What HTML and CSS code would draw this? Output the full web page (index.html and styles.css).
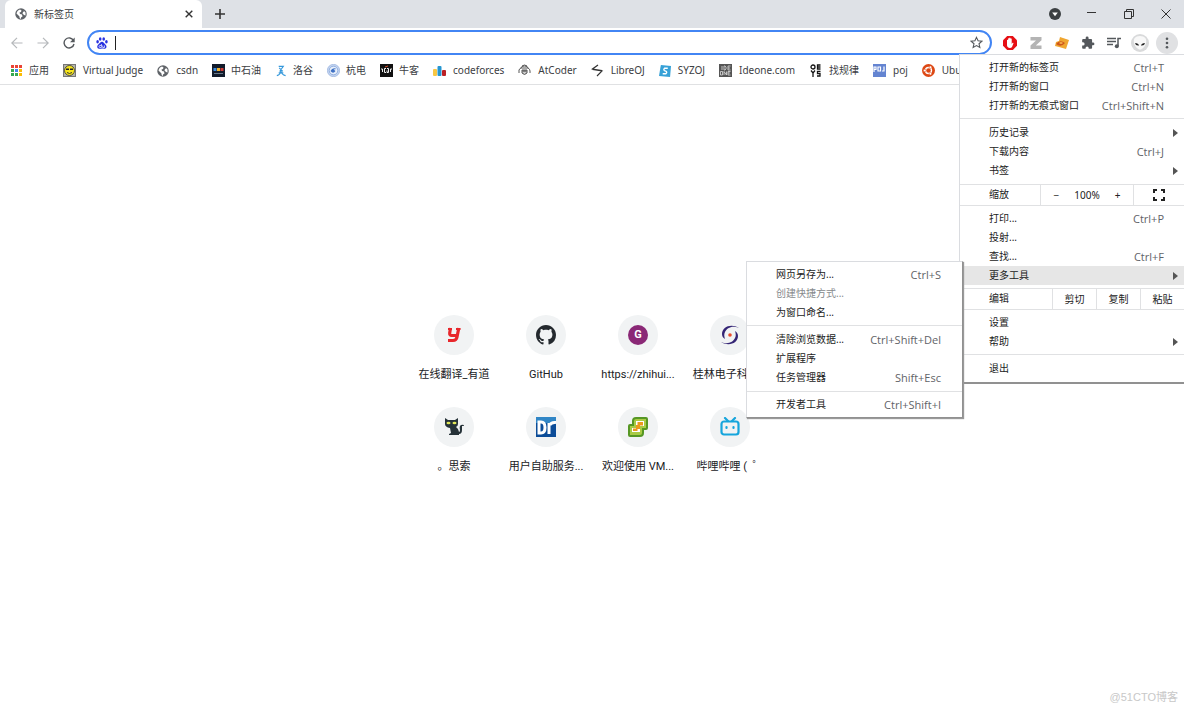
FILE: index.html
```html
<!DOCTYPE html>
<html lang="zh-CN">
<head>
<meta charset="utf-8">
<title>新标签页</title>
<link rel="stylesheet" href="styles.css">
</head>
<body>
<svg class="defs" aria-hidden="true">
  <symbol id="globe" viewBox="0 0 24 24"><circle cx="12" cy="12" r="11.5" fill="#5f6368"/><path d="M4 8c1-2 3-4 6-5l3 2-1 3-3 1 1 3 4 1 1 4-3 2v3c-3-1-3-3-3-5L6 14l-3-3zM17 5l4 4v6l-3-1-3-3 1-3 2-1z" fill="#fff"/></symbol>
  <symbol id="arrow" viewBox="0 0 6 8"><path d="M0 0l5 4-5 4z" fill="#555"/></symbol>
</svg>
<header class="browser">
  <div class="tabstrip">
    <div class="tab">
      <svg class="i12"><use href="#globe"/></svg>
      <span class="tab-title">新标签页</span>
      <button class="bare" aria-label="关闭标签页"><svg class="i8" viewBox="0 0 8 8"><path d="M.7.7l6.600 6.600M7.300.7L.7 7.300" stroke="#333" stroke-width="1.400"/></svg></button>
    </div>
    <button class="bare plus" aria-label="新标签页按钮"><svg class="i10" viewBox="0 0 10 10"><path d="M5 0v10M0 5h10" stroke="#333" stroke-width="1.600"/></svg></button>
    <div class="window-controls">
      <button class="bare" aria-label="搜索标签页"><svg class="i12" viewBox="0 0 12 12"><circle cx="6" cy="6" r="6" fill="#3c4043"/><path d="M3.200 4.500h5.600L6 8.200z" fill="#fff"/></svg></button>
      <button class="bare" aria-label="最小化"><svg class="i10" viewBox="0 0 10 10"><path d="M0 3.500h9" stroke="#333"/></svg></button>
      <button class="bare" aria-label="还原"><svg class="i10" viewBox="0 0 10 10"><path d="M.5 2.500h7v7h-7zM2.500 2.500v-2h7v7h-2" fill="none" stroke="#333"/></svg></button>
      <button class="bare" aria-label="关闭"><svg class="i10" viewBox="0 0 10 10"><path d="M.5.5l9 9M9.500.5l-9 9" stroke="#333"/></svg></button>
    </div>
  </div>
  <div class="toolbar">
    <button class="bare nav" aria-label="后退"><svg class="i12" viewBox="0 0 12 12"><path d="M11.500 6H1M6 .8L.8 6 6 11.200" fill="none" stroke="#b5b8bb" stroke-width="1.200"/></svg></button>
    <button class="bare nav" aria-label="前进"><svg class="i12" viewBox="0 0 12 12"><path d="M.5 6H11M6 .8L11.200 6 6 11.200" fill="none" stroke="#b5b8bb" stroke-width="1.200"/></svg></button>
    <button class="bare nav" aria-label="重新加载"><svg class="i12" viewBox="0 0 12 12"><path d="M10.500 3.500A5 5 0 1 0 11 7" fill="none" stroke="#54585c" stroke-width="1.400"/><path d="M11.700.5v4.700H7z" fill="#54585c"/></svg></button>
    <div class="omnibox">
      <svg class="i12" viewBox="0 0 12 12" fill="#2932e1"><ellipse cx="1.600" cy="4.800" rx="1.300" ry="1.700"/><ellipse cx="4.200" cy="2" rx="1.300" ry="1.800"/><ellipse cx="7.700" cy="2" rx="1.300" ry="1.800"/><ellipse cx="10.400" cy="4.800" rx="1.300" ry="1.700"/><path d="M6 4.800c1.600 0 2 1.600 3.400 2.700 1.900 1.700 1.200 4-.7 4.200-1 .1-1.600-.2-2.700-.2s-1.900.4-3 .2c-2-.3-2.400-2.700-.6-4.200C3.800 6.400 4.400 4.800 6 4.800z"/><path d="M5.400 7v3.500H4a1 1 0 0 1 0-2h1.400M6.700 8.500v2h1.800v-2" stroke="#fff" stroke-width=".7" fill="none"/></svg>
      <i class="caret"></i>
      <input class="address" type="text" aria-label="地址和搜索栏">
      <button class="bare" aria-label="收藏"><svg class="i13" viewBox="0 0 24 24"><path d="M12 2.500l2.900 6.400 7 .7-5.300 4.700 1.600 6.900L12 17.600l-6.200 3.600 1.600-6.900L2.100 9.600l7-.7z" fill="none" stroke="#54585c" stroke-width="2"/></svg></button>
    </div>
    <div class="extensions">
      <button class="bare ext" aria-label="广告拦截"><svg class="i14" viewBox="0 0 14 14"><path d="M4.200 0h5.600L14 4.200v5.600L9.800 14H4.200L0 9.800V4.200z" fill="#e60f14"/><path d="M4 6.500V4q.6-.7 1.100 0v2.500-4q.6-.7 1.200 0v3.700-4.300q.6-.6 1.200 0v4.500-3.700q.6-.6 1.200 0V8l.9-1.200q.8-.4.9.4L9 11q-.6 1-2.100 1C5 12 4 10.600 4 9z" fill="#fff"/></svg></button>
      <button class="bare ext" aria-label="Z 扩展"><svg class="i14" viewBox="0 0 14 14"><path d="M1.500 1h11v3.200L6.800 9.500h5.700V13h-11V9.500L7 4.500H1.500z" fill="#b4b4b4"/></svg></button>
      <button class="bare ext" aria-label="油猴扩展"><svg class="i14" viewBox="0 0 14 14"><path d="M5 1l9 3-3 9-7-2-4-1 1-4 3-1z" fill="#efa630"/><path d="M1 8q4-5 9-1-4 5-9 1z" fill="#ce561b"/><path d="M4 7q2-2 4 0-2 2-4 0z" fill="#f5b04a"/></svg></button>
      <button class="bare ext" aria-label="扩展程序"><svg class="i14" viewBox="0 0 24 24"><path d="M20.500 11H19V7c0-1.100-.9-2-2-2h-4V3.500a2.500 2.500 0 0 0-5 0V5H4c-1.100 0-2 .9-2 2v3.800h1.500a2.700 2.700 0 0 1 0 5.400H2V20c0 1.100.9 2 2 2h3.800v-1.500a2.700 2.700 0 0 1 5.400 0V22H17c1.100 0 2-.9 2-2v-4h1.500a2.500 2.500 0 0 0 0-5z" fill="#54585c"/></svg></button>
      <button class="bare ext" aria-label="媒体控制"><svg class="i14" viewBox="0 0 14 14"><path d="M0 2.500h9M0 5.500h9M0 8.500h6" stroke="#54585c" stroke-width="1.300"/><path d="M11 10V2.500h3" fill="none" stroke="#54585c" stroke-width="1.500"/><circle cx="9.800" cy="10.300" r="2" fill="#54585c"/></svg></button>
      <button class="bare ext" aria-label="个人资料"><svg class="i18" viewBox="0 0 18 18"><circle cx="9" cy="9" r="9" fill="#d9dadb"/><path d="M9 2c5 0 7 3 6 7s-4 6.500-6 6.500S4 13 3 9s1-7 6-7z" fill="#f8f8f8"/><path d="M4 9q3.500 0 4 2.500-3.500.5-4-2.500zM14 9q-3.500 0-4 2.500 3.500.5 4-2.500z" fill="#222"/></svg></button>
      <button class="bare ext kebab" aria-label="自定义及控制" aria-expanded="true"><svg class="i12" viewBox="0 0 12 12" fill="#54585c"><circle cx="6" cy="1.700" r="1.300"/><circle cx="6" cy="6" r="1.300"/><circle cx="6" cy="10.300" r="1.300"/></svg></button>
    </div>
  </div>
  <nav class="bookmarks">
    <a href="#"><svg class="i13" viewBox="0 0 13 13"><path d="M1 1h3v3H1zM5 1h3v3H5zM9 1h3v3H9z" fill="#ea4335"/><path d="M1 5h3v3H1zM1 9h3v3H1zM5 9h3v3H5z" fill="#34a853"/><path d="M5 5h3v3H5z" fill="#4285f4"/><path d="M9 5h3v3H9zM9 9h3v3H9z" fill="#fbbc04"/><path d="M4.500 0v13M8.500 0v13M0 4.500h13M0 8.500h13" stroke="#fff"/></svg>应用</a>
    <a href="#" class="latin"><svg class="i13" viewBox="0 0 13 13"><path d="M0 0h13v13H0z" fill="#777"/><path d="M1 1h11v11H1z" fill="#b5b5a8"/><circle cx="6.500" cy="6.500" r="5" fill="#f6e51b" stroke="#333" stroke-width=".8"/><path d="M3 4.500h3v1.500H3zM7 4.500h3v1.500H7z" fill="#222"/><path d="M4 8.500q2.500 2 5 0" fill="none" stroke="#333"/></svg>Virtual Judge</a>
    <a href="#" class="latin"><svg class="i12"><use href="#globe"/></svg>csdn</a>
    <a href="#"><svg class="i13" viewBox="0 0 13 13"><path d="M0 0h13v13H0z" fill="#111b2b"/><path d="M1.500 4h3v3h-3z" fill="#3b8de0"/><path d="M5 4h3v3H5z" fill="#f0b42d"/><path d="M8.500 4h3v3h-3z" fill="#d13a35"/><path d="M2 9.500h9" stroke="#65778a"/></svg>中石油</a>
    <a href="#"><svg class="i12" viewBox="0 0 13 13"><path d="M4 1.500h5L5 7M4.500 3l4 4M2 11.500q4-1 4.500-5 .5 4 5 5M4 8.500h5" fill="none" stroke="#3498db" stroke-width="1.200"/></svg>洛谷</a>
    <a href="#"><svg class="i13" viewBox="0 0 13 13"><circle cx="6.500" cy="6.500" r="6.200" fill="#c4d5f0" stroke="#8eabdc" stroke-width=".6"/><circle cx="6.500" cy="6.500" r="4.300" fill="#e8f0fb" stroke="#7599d6" stroke-width=".7"/><path d="M3.500 7q2-4 6-2l-3 .5L8.500 7q-2 3-4 1z" fill="#3e70c4"/></svg>杭电</a>
    <a href="#"><svg class="i13" viewBox="0 0 13 13"><path d="M0 0h13v13H0z" fill="#111"/><path d="M1 5h1.500v3M12 5h-1.500v3M6 4.500H4.500v4H6M7 4.500h1.500v4H7v-2" fill="none" stroke="#eee"/><path d="M5 3l3-1" stroke="#d04c28"/></svg>牛客</a>
    <a href="#" class="latin"><svg class="i13" viewBox="0 0 13 13"><rect y="5" width="4" height="7" rx="1" fill="#f7c744"/><rect x="4.500" y="2" width="4" height="10" rx="1" fill="#2596d1"/><rect x="9" y="6" width="4" height="6" rx="1" fill="#ba2025"/></svg>codeforces</a>
    <a href="#" class="latin"><svg class="i13" viewBox="0 0 13 13" fill="none" stroke="#555"><path d="M3 4q0-2 3.500-2T10 4M4 2l2.500-1L9 2M1 9V6q1-2 2-2h7q2 1 2 3v2"/><path d="M4 6h5v3q-2.500 3-5 0z" fill="#ccc"/><path d="M4.500 7h4" stroke-width="1.300"/></svg>AtCoder</a>
    <a href="#" class="latin"><svg class="i13" viewBox="0 0 13 13"><path d="M7 1L1.500 5 11 6.500M1.500 5.500L11 7 6 12" fill="none" stroke="#333" stroke-width="1.200"/></svg>LibreOJ</a>
    <a href="#" class="latin"><svg class="i12" viewBox="0 0 13 13"><path d="M2 0l11 1-1 12-12-1z" fill="#36a1d7"/><path d="M9.500 3.500H6q-1.500 1.500 0 2.500l2 1q1 1.500-.5 2.500H4" fill="none" stroke="#fff" stroke-width="1.500"/></svg>SYZOJ</a>
    <a href="#" class="latin"><svg class="i13" viewBox="0 0 13 13"><path d="M0 0h13v13H0z" fill="#555"/><path d="M3 2v4M5 2v4h1l1-1V3L6 2zM11.500 2H9v4h2.500M9 4h2M1.500 7.500h2V11h-2zM5 11V7.500L7.500 11V7.500M11.500 7.500H9V11h2.500M9 9h2" fill="none" stroke="#ddd" stroke-width=".8"/></svg>Ideone.com</a>
    <a href="#" class="latin"><svg class="i13" viewBox="0 0 13 13"><circle cx="4" cy="3" r="2" fill="none" stroke="#151515" stroke-width="1.300"/><path d="M11.500 1H8.500v4h3M8.500 3h3M2 6.500l2 2.500 2-2.500M4 9v4M11.500 7.300h-3v2.200h2.500V12H8" fill="none" stroke="#151515" stroke-width="1.300"/></svg>找规律</a>
    <a href="#" class="latin"><svg class="i13" viewBox="0 0 13 13"><path d="M0 0h13v13H0z" fill="#6484d1"/><path d="M1 8V3h2v2.500H1M5 3h2.500v4H5zM11 2.500V7H9" fill="none" stroke="#fff" stroke-width="1.200"/></svg>poj</a>
    <a href="#" class="latin"><svg class="i13" viewBox="0 0 13 13"><circle cx="6.500" cy="6.500" r="6.500" fill="#dd4814"/><circle cx="6.500" cy="6.500" r="3" fill="none" stroke="#fff" stroke-width="1.400"/><g fill="#fff" stroke="#dd4814" stroke-width=".5"><circle cx="2.700" cy="6.500" r="1.300"/><circle cx="8.400" cy="3.200" r="1.300"/><circle cx="8.400" cy="9.800" r="1.300"/></g></svg>Ubuntu</a>
  </nav>
</header>

<main class="shortcuts">
  <a href="#" class="tile"><span class="disc"><svg class="i20" viewBox="0 0 20 20"><path d="M6.500 3L5.700 8q-.3 2.500 2 2.500H12M14.800 3l-1.800 9q-.6 3.500-4 3.500H4" fill="none" stroke="#e8272c" stroke-width="3.200"/><path d="M4 3h4v2H4zM12 3h4.500v2H12z" fill="#e8272c"/></svg></span>在线翻译_有道</a>
  <a href="#" class="tile"><span class="disc"><svg class="i20" viewBox="0 0 16 16"><path fill="#24292e" d="M8 0C3.580 0 0 3.580 0 8c0 3.540 2.290 6.530 5.470 7.590.4.070.55-.17.55-.38 0-.19-.01-.82-.01-1.490-2.010.37-2.530-.49-2.690-.94-.09-.23-.48-.94-.82-1.130-.28-.15-.68-.52-.01-.53.63-.01 1.080.58 1.230.82.72 1.210 1.870.87 2.330.66.07-.52.28-.87.51-1.070-1.780-.2-3.640-.89-3.640-3.950 0-.87.31-1.590.82-2.150-.08-.2-.36-1.020.08-2.120 0 0 .67-.21 2.200.82.640-.18 1.320-.27 2-.27s1.360.09 2 .27c1.530-1.040 2.200-.82 2.200-.82.44 1.100.16 1.920.08 2.120.51.56.82 1.270.82 2.150 0 3.070-1.870 3.750-3.650 3.950.29.25.54.73.54 1.480 0 1.070-.01 1.930-.01 2.200 0 .21.15.46.55.38A8 8 0 0 0 16 8c0-4.420-3.580-8-8-8z"/></svg></span>GitHub</a>
  <a href="#" class="tile"><span class="disc"><span class="letter">G</span></span>https://zhihui...</a>
  <a href="#" class="tile"><span class="disc"><svg class="i20" viewBox="0 0 20 20"><path d="M19 3C11-2 2 2 2 9c0 2 1 4 3 5-1-3-1-5 0-7C7 3 12 0 19 3zM1 17c8 5 17 1 17-6 0-2-1-4-3-5 1 3 1 5 0 7-2 4-7 7-14 4z" fill="#342575"/><circle cx="10" cy="10" r="1.800" fill="#e94c2b"/></svg></span>桂林电子科技...</a>
  <a href="#" class="tile"><span class="disc"><svg class="i20" viewBox="0 0 20 20"><path d="M1 1l3 2h7l3-2v6q0 2-2 3 3 2 3 5 1 0 1-2-1-4 1-5 3-1 3 1h-2q0 1 0 4 0 4-3 4v1H5v-1l2-1-1-5Q1 10 1 7z" fill="#263238"/><ellipse cx="4.500" cy="6" rx="2" ry="1.300" fill="#e1e758"/><ellipse cx="10.500" cy="6" rx="2" ry="1.300" fill="#e1e758"/></svg></span>。思索</a>
  <a href="#" class="tile"><span class="disc"><svg class="i20" viewBox="0 0 20 20"><path d="M0 0h20v20H0z" fill="#0b4c98"/><path d="M0 0h20v6H0z" fill="#3186c6"/><path d="M3 5v11h2q4 0 4-5.500T5 5zM13 17V6M14 8q1-3 6-2.500" fill="none" stroke="#fff" stroke-width="3"/></svg></span>用户自助服务...</a>
  <a href="#" class="tile"><span class="disc"><svg class="i20" viewBox="0 0 20 20"><path d="M8 1h10q1 0 1 1v9q0 1-1 1h-3v4q0 3-3 3H2q-1 0-1-1V9q0-1 1-1h3V4q0-3 3-3z" fill="#a9cb45" stroke="#569724" stroke-width="2"/><path d="M8 4h8v5h-4v6H4v-4h4z" fill="#fff"/><path d="M9.500 5H15v3.500h-3V12H9.500v2H5v-2.500h3V8h1.500z" fill="#eb9a1d"/></svg></span>欢迎使用 VM...</a>
  <a href="#" class="tile"><span class="disc"><svg class="i20" viewBox="0 0 20 20" fill="none" stroke="#16a5dc" stroke-width="2.200" stroke-linecap="round"><rect x="1.500" y="4.500" width="17" height="13" rx="2.500"/><path d="M5 1l3 3M15 1l-3 3M6.500 10v1M13.500 10v1"/></svg></span>哔哩哔哩 ( &nbsp;゜</a>
</main>

<div class="menu main-menu" role="menu">
  <div class="group first">
    <button class="item" role="menuitem">打开新的标签页<kbd>Ctrl+T</kbd></button>
    <button class="item" role="menuitem">打开新的窗口<kbd>Ctrl+N</kbd></button>
    <button class="item" role="menuitem">打开新的无痕式窗口<kbd>Ctrl+Shift+N</kbd></button>
  </div>
  <div class="group">
    <button class="item parent" role="menuitem">历史记录<svg class="chevron"><use href="#arrow"/></svg></button>
    <button class="item" role="menuitem">下载内容<kbd>Ctrl+J</kbd></button>
    <button class="item parent" role="menuitem">书签<svg class="chevron"><use href="#arrow"/></svg></button>
  </div>
  <div class="inline-row">
    <span class="row-label">缩放</span>
    <div class="zoom">
      <button class="bare" aria-label="缩小">−</button><span class="percent">100%</span><button class="bare" aria-label="放大">+</button>
    </div>
    <button class="bare full" aria-label="全屏"><svg class="i12" viewBox="0 0 12 12"><path d="M1 4V1h3M8 1h3v3M11 8v3H8M4 11H1V8" fill="none" stroke="#222" stroke-width="2"/></svg></button>
  </div>
  <div class="group tight">
    <button class="item" role="menuitem">打印...<kbd>Ctrl+P</kbd></button>
    <button class="item" role="menuitem">投射...</button>
    <button class="item" role="menuitem">查找...<kbd>Ctrl+F</kbd></button>
    <div class="submenu-anchor">
      <button class="item parent active" role="menuitem" aria-expanded="true">更多工具<svg class="chevron"><use href="#arrow"/></svg></button>
      <div class="menu submenu" role="menu">
        <div class="group first">
          <button class="item" role="menuitem">网页另存为...<kbd>Ctrl+S</kbd></button>
          <button class="item" role="menuitem" disabled>创建快捷方式...</button>
          <button class="item" role="menuitem">为窗口命名...</button>
        </div>
        <div class="group">
          <button class="item" role="menuitem">清除浏览数据...<kbd>Ctrl+Shift+Del</kbd></button>
          <button class="item" role="menuitem">扩展程序</button>
          <button class="item" role="menuitem">任务管理器<kbd>Shift+Esc</kbd></button>
        </div>
        <div class="group tight">
          <button class="item" role="menuitem">开发者工具<kbd>Ctrl+Shift+I</kbd></button>
        </div>
      </div>
    </div>
  </div>
  <div class="inline-row edit">
    <span class="row-label">编辑</span>
    <button class="bare cell">剪切</button><button class="bare cell">复制</button><button class="bare cell">粘贴</button>
  </div>
  <div class="group tight">
    <button class="item" role="menuitem">设置</button>
    <button class="item parent" role="menuitem">帮助<svg class="chevron"><use href="#arrow"/></svg></button>
  </div>
  <div class="group">
    <button class="item" role="menuitem">退出</button>
  </div>
</div>
<footer class="watermark">@51CTO博客</footer>
</body>
</html>
```

FILE: styles.css
```css
* { box-sizing: border-box; }
body {
  margin: 0;
  min-height: 100vh;
  position: relative;
  overflow: hidden;
  background: #fff;
  color: #3c4043;
  font: 10px/19px "Noto Sans", "Noto Sans CJK SC", sans-serif;
}
svg { display: block; flex: none; }
.defs { position: absolute; width: 0; height: 0; }
.i8 { width: 8px; height: 8px; }
.i10 { width: 10px; height: 10px; }
.i12 { width: 12px; height: 12px; }
.i13 { width: 13px; height: 13px; }
.i14 { width: 14px; height: 14px; }
.i18 { width: 18px; height: 18px; }
.i20 { width: 20px; height: 20px; }
button { font: inherit; color: inherit; }
a { color: inherit; text-decoration: none; }
.bare {
  display: flex;
  align-items: center;
  justify-content: center;
  padding: 0;
  border: 0;
  background: none;
}

.tabstrip { display: flex; align-items: center; height: 28px; padding-left: 5px; background: #dee1e6; }
.tab {
  display: flex;
  align-items: center;
  gap: 7px;
  width: 197px;
  height: 28px;
  padding: 0 9px 0 10px;
  border-radius: 6px 6px 0 0;
  background: #fff;
}
.tab-title { flex: 1; }
.plus { width: 36px; }
.window-controls { display: flex; align-items: center; margin-left: auto; height: 26px; }
.window-controls .bare { width: 37px; height: 26px; }

.toolbar { display: flex; align-items: center; height: 29px; padding: 0 6px 0 4px; }
.nav { width: 26px; height: 26px; }
.omnibox {
  display: flex;
  align-items: center;
  flex: 1;
  height: 25px;
  margin-left: 5px;
  padding: 0 7px;
  border: 2px solid #4285f4;
  border-radius: 13px;
}
.caret { width: 1px; height: 14px; margin-left: 7px; background: #222; }
.address { flex: 1; min-width: 0; border: 0; outline: 0; background: none; font: inherit; }
.extensions { display: flex; align-items: center; margin-left: 5px; }
.ext { width: 26px; height: 22px; }
.kebab { width: 22px; margin-left: 3px; border-radius: 11px; background: #e0e1e3; }

.bookmarks {
  display: flex;
  align-items: center;
  gap: 14px;
  height: 28px;
  padding: 0 10px;
  overflow: hidden;
  border-bottom: 1px solid #e0e1e3;
}
.bookmarks a { display: flex; align-items: center; gap: 6px; white-space: nowrap; }
.bookmarks .latin { gap: 7px; }

.shortcuts { display: grid; grid-template-columns: repeat(4, 92px); justify-content: center; padding-top: 230px; }
.tile {
  display: flex;
  flex-direction: column;
  align-items: center;
  gap: 10px;
  height: 92px;
  color: #202124;
  font: 11px/19px Roboto, "Noto Sans CJK SC", sans-serif;
  white-space: nowrap;
}
.disc {
  display: flex;
  align-items: center;
  justify-content: center;
  width: 40px;
  height: 40px;
  border-radius: 50%;
  background: #f1f3f4;
}
.letter {
  width: 20px;
  height: 20px;
  border-radius: 50%;
  background: #8a2876;
  color: #fff;
  font-weight: 700;
  line-height: 20px;
  text-align: center;
}

.menu { position: absolute; background: #fff; border: 1px solid #dadce0; color: #222; }
.main-menu { top: 54px; right: 0; width: 225px; border-right: 0; border-bottom: 2px solid #919191; }
.submenu {
  top: -5px;
  right: calc(100% - 3px);
  width: 217px;
  border-right-color: #919191;
  border-bottom-color: #919191;
  box-shadow: 1px 1px 1px #999;
}
.group { padding: 4px 0; border-top: 1px solid #e0e1e3; }
.group.first { padding: 3px 0; border-top: 0; }
.group.tight { padding: 3px 0; }
.item {
  display: flex;
  align-items: center;
  justify-content: space-between;
  width: 100%;
  height: 19px;
  padding: 0 20px 0 29px;
  border: 0;
  background: none;
  text-align: left;
  white-space: nowrap;
}
.submenu .item { padding-right: 21px; }
.item:disabled { color: #86898c; }
.item.active { background: #e6e6e6; }
.item.parent { padding-right: 5px; }
.item kbd { color: #5f6368; font: 11px/19px "Open Sans", sans-serif; }
.chevron { width: 6px; height: 8px; }
.submenu-anchor { position: relative; }
.inline-row { display: flex; height: 21px; border-top: 1px solid #e0e1e3; }
.inline-row > * { border-left: 1px solid #e0e1e3; }
.row-label { flex: 1; padding-left: 29px; border-left: 0; }
.zoom { display: flex; align-items: center; justify-content: center; gap: 15px; width: 93px; }
.inline-row .full { width: 51px; border-left: 1px solid #e0e1e3; }
.inline-row .cell { width: 44px; border-left: 1px solid #e0e1e3; }
.watermark { position: absolute; right: 6px; bottom: 2px; color: #c8c8c8; font: 11px/19px "Liberation Sans", "Noto Sans CJK SC", sans-serif; }
```
